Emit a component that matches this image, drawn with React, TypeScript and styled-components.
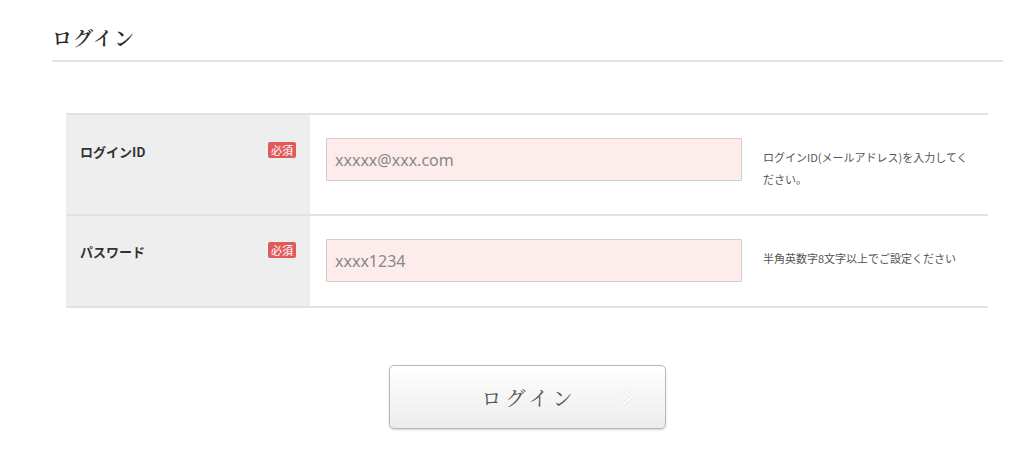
import React from "react";
import styled, { createGlobalStyle } from "styled-components";

const GlobalStyle = createGlobalStyle`
  html, body { margin: 0; padding: 0; background: #fff; }
  body {
    font-family: "Noto Sans CJK JP", "Noto Sans", sans-serif;
    color: #333;
  }
  * { box-sizing: border-box; }
`;

const Page = styled.div`
  padding: 26px 21px 36px 52px;
`;

const Title = styled.h1`
  margin: 0;
  padding: 0 0 10px 0;
  font-family: "Noto Serif CJK JP", "Noto Sans CJK JP", serif;
  font-size: 20px;
  line-height: 24px;
  font-weight: 600;
  letter-spacing: 1px;
  color: #2a2a2a;
  border-bottom: 2px solid #e3e3e3;
`;

const FormArea = styled.div`
  margin: 51px 15px 0 14px;
`;

const Table = styled.div`
  border-top: 2px solid #e2e2e2;
`;

const Row = styled.div`
  display: grid;
  grid-template-columns: 244px 432px 1fr;
  border-bottom: 2px solid #e2e2e2;
`;

const LabelCell = styled.div<{ $top: number }>`
  background: #eeeeee;
  display: flex;
  align-items: flex-start;
  justify-content: space-between;
  padding: ${(p) => p.$top}px 14px 0 14px;
`;

const LabelText = styled.span`
  font-size: 13px;
  font-weight: 700;
  line-height: 18px;
  color: #333;
`;

const Badge = styled.span`
  display: inline-block;
  background: #df5b5b;
  color: #fff;
  font-size: 11px;
  line-height: 16px;
  height: 16px;
  padding: 0 3px;
  border-radius: 2px;
  margin-top: -1px;
`;

const InputCell = styled.div`
  padding: 23px 0 24px 16px;
`;

const TextInput = styled.input`
  display: block;
  width: 416px;
  height: 43px;
  border: 1px solid #d6cccc;
  background: #fdecec;
  border-radius: 1px;
  padding: 0 8px;
  font-family: "Noto Sans", "Open Sans", sans-serif;
  font-size: 16px;
  color: #333;
  outline: none;
  &::placeholder { color: #888; }
`;

const HelpCell = styled.div`
  padding: 31px 13px 24px 21px;
  font-size: 11px;
  line-height: 22px;
  color: #555;
`;

const ButtonRow = styled.div`
  display: flex;
  justify-content: center;
  margin-top: 57px;
`;

const SubmitButton = styled.button`
  position: relative;
  width: 277px;
  height: 64px;
  border: 1px solid #b8b8b8;
  border-radius: 5px;
  background: linear-gradient(#ffffff, #ececec);
  box-shadow: 0 1px 2px rgba(0, 0, 0, 0.18);
  font-family: "Noto Serif CJK JP", "Noto Sans CJK JP", serif;
  font-size: 20px;
  letter-spacing: 4px;
  color: #555;
  cursor: pointer;
  padding: 0 0 0 4px;
`;

const Chevron = styled.svg`
  position: absolute;
  right: 32px;
  top: 22px;
  filter: drop-shadow(0 0 1px rgba(0, 0, 0, 0.12));
`;

type FieldProps = {
  label: string;
  placeholder: string;
  type: string;
  help: string;
  labelTop: number;
};

const Field = ({ label, placeholder, type, help, labelTop }: FieldProps) => (
  <Row>
    <LabelCell $top={labelTop}>
      <LabelText>{label}</LabelText>
      <Badge>必須</Badge>
    </LabelCell>
    <InputCell>
      <TextInput type={type} placeholder={placeholder} />
    </InputCell>
    <HelpCell>{help}</HelpCell>
  </Row>
);

export default function App() {
  return (
    <>
      <GlobalStyle />
      <Page>
        <Title>ログイン</Title>
        <FormArea>
          <Table>
            <Field
              label="ログインID"
              placeholder="xxxxx@xxx.com"
              type="text"
              help="ログインID(メールアドレス)を入力してください。"
              labelTop={28}
            />
            <Field
              label="パスワード"
              placeholder="xxxx1234"
              type="text"
              help="半角英数字8文字以上でご設定ください"
              labelTop={27}
            />
          </Table>
          <ButtonRow>
            <SubmitButton type="button">
              ログイン
              <Chevron width="12" height="18" viewBox="0 0 12 18">
                <path d="M2 1 L10 9 L2 17" fill="none" stroke="#ffffff" strokeWidth="1.6" />
              </Chevron>
            </SubmitButton>
          </ButtonRow>
        </FormArea>
      </Page>
    </>
  );
}
